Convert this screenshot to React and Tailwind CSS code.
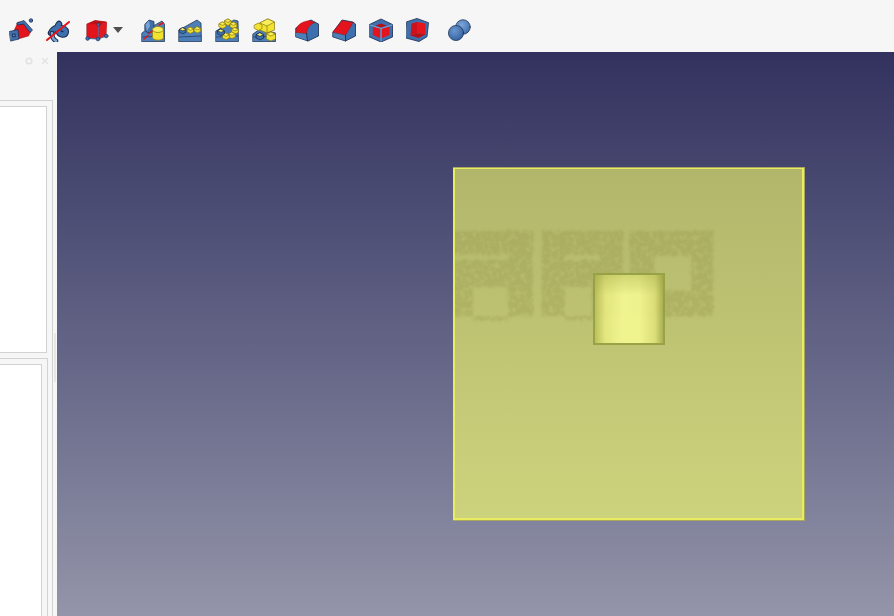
const OUT = "#16294d";
const BLUE = "#3f70ae";
const LIGHT = "#7aa3d4";
const RED = "#e3141b";
const YEL = "#f2e230";
const DYEL = "#8a7a10";

const Icon = ({ children, className = "" }) => (
  <svg viewBox="0 0 24 24" className={`h-6 w-6 shrink-0 ${className}`} strokeLinejoin="round" strokeLinecap="round">
    {children}
  </svg>
);

const Nut = ({ x, y, s = 1, fill = YEL, line = DYEL }) => (
  <g transform={`translate(${x} ${y}) scale(${s})`} stroke={line} strokeWidth="0.7">
    <path d="M-3.2 -1 L0 -2.8 L3.2 -1 L3.2 1.8 L0 3.4 L-3.2 1.8 Z" fill={fill} />
    <path d="M-3.2 -1 L0 0.4 L3.2 -1 L0 -2.8 Z" fill="#f8ee5c" />
  </g>
);

const Draft = () => (
  <Icon>
    <path d="M4 15 L9 4 L16 5 L22 13 L19.5 18 L9 21 Z" fill={RED} stroke="#8f0c12" strokeWidth="0.5" />
    <path d="M8 5 L15 2.5 L23.5 12 L21 14.5 L14.5 6 L9 7 Z" fill={BLUE} stroke={OUT} strokeWidth="0.7" />
    <path d="M0.5 13.5 L9 11.5 L10 21 L2 23 Z" fill={BLUE} stroke={OUT} strokeWidth="0.7" />
    <rect x="3.2" y="15.6" width="3.4" height="3.6" fill="#1b2f55" />
    <rect x="4.2" y="16.6" width="1.4" height="1.6" fill={LIGHT} />
    <circle cx="22" cy="2.5" r="1.8" fill={BLUE} stroke={OUT} strokeWidth="0.7" />
  </Icon>
);

const Knot = () => (
  <Icon>
    <path d="M5 15 C8 9 14 9 18 11 C21 13 20 17 16 16.5 C12 15.5 10 9 13 6" fill="none" stroke={OUT} strokeWidth="6.4" />
    <path d="M5 15 C8 9 14 9 18 11 C21 13 20 17 16 16.5 C12 15.5 10 9 13 6" fill="none" stroke={BLUE} strokeWidth="4.4" />
    <path d="M6 15 C6 19 8 22 10 23" fill="none" stroke={OUT} strokeWidth="4.6" />
    <path d="M6 15 C6 19 8 22 10 23" fill="none" stroke={LIGHT} strokeWidth="2.6" />
    <path d="M1 22 L23 4" stroke={RED} strokeWidth="2" />
  </Icon>
);

const Cube = () => (
  <Icon>
    <path d="M2 6 L10 2.5 L21.5 4 L21 18 L13 21 L2 20 Z" fill={RED} stroke="#8f0c12" strokeWidth="0.6" />
    <path d="M13.5 6.5 L21.5 4 L21 18 L13 21 Z" fill="#e01a1f" />
    <path d="M2 6 L10 2.5 L21.5 4 L13.5 6.5 Z" fill="#c01015" />
    <path d="M2 20.5 L13 21 L21 18 M13.5 6.5 L13 21" stroke={BLUE} strokeWidth="0.8" fill="none" />
    <circle cx="2.6" cy="20.5" r="1.9" fill={BLUE} stroke={OUT} strokeWidth="0.5" />
    <circle cx="13" cy="21" r="1.9" fill={BLUE} stroke={OUT} strokeWidth="0.5" />
    <circle cx="21.2" cy="18" r="1.9" fill={BLUE} stroke={OUT} strokeWidth="0.5" />
    <circle cx="13.5" cy="6.5" r="1.6" fill={BLUE} stroke={OUT} strokeWidth="0.5" />
  </Icon>
);

const Base = ({ d }) => (
  <>
    <path d={d} fill="#4d7fb9" stroke={OUT} strokeWidth="0.7" />
    <path d="M1.5 19 L23 18" stroke={OUT} strokeWidth="0.6" />
  </>
);

const Mirror = () => (
  <Icon>
    <Base d="M1 15 L5 12 L21 3 L23.5 6 L23.5 23.5 L1 23.5 Z" />
    <path d="M4 6 L8 2 L13 3.5 L13 13 L7 15 L4 12.5 Z" fill={BLUE} stroke={OUT} strokeWidth="0.7" />
    <path d="M4.5 6.5 L8 2.5 L9 8 L6 13 Z" fill={LIGHT} />
    <path d="M11.5 11.5 L11.5 19.5 C12 23 22.5 23 22.5 19.5 L22.5 11.5 Z" fill={YEL} stroke={DYEL} strokeWidth="0.7" />
    <ellipse cx="17" cy="11.5" rx="5.5" ry="3" fill="#f8ee5c" stroke={DYEL} strokeWidth="0.7" />
    <path d="M3 21 L7 17.5 M8 15.5 L11 13 M18 7 L22 5" stroke={RED} strokeWidth="1.4" />
  </Icon>
);

const LinearPattern = () => (
  <Icon>
    <Base d="M1 12 L19 2 L23 5 L23.5 23.5 L1 23.5 Z" />
    <Nut x={4.8} y={12.5} fill={BLUE} line={OUT} />
    <Nut x={12.4} y={12} />
    <Nut x={19.4} y={11.5} />
  </Icon>
);

const PolarPattern = () => (
  <Icon>
    <Base d="M1 13 L19 2 L23 3 L23.5 23.5 L1 23.5 Z" />
    <Nut x={13} y={4} s={1.05} />
    <Nut x={7.5} y={7} s={1.05} />
    <Nut x={18.5} y={7} s={1.05} />
    <Nut x={20} y={12.5} s={1.05} />
    <Nut x={17} y={17} s={1.05} />
    <Nut x={11} y={18} s={1.05} />
    <Nut x={6} y={14} s={1.05} fill={BLUE} line={OUT} />
  </Icon>
);

const MultiTransform = () => (
  <Icon>
    <Base d="M1 16 L8 11 L16 13 L23.5 15 L23.5 23.5 L1 23.5 Z" />
    <g stroke={DYEL} strokeWidth="0.7">
      <path d="M8 5 L16 1 L22.5 4 L22.5 12 L15 15 L8 12 Z" fill={YEL} />
      <path d="M8 5 L15 8 L22.5 4 L16 1 Z" fill="#f8ee5c" />
      <path d="M15 8 L15 15" fill="none" />
      <path d="M2.5 7 L6.5 5 L10 7 L10 10.5 L6.5 12.5 L2.5 10.5 Z" fill={YEL} />
      <path d="M14.5 16 L19 14 L23.5 16 L23.5 21 L19 23 L14.5 21 Z" fill={YEL} />
      <path d="M14.5 16 L19 18 L23.5 16 L19 14 Z" fill="#f8ee5c" />
    </g>
    <Nut x={8} y={18} s={1.15} fill={BLUE} line={OUT} />
  </Icon>
);

const Fillet = () => (
  <Icon>
    <path d="M1 10 L16 2 L23.5 6 L23.5 18 L13 23 L1 19 Z" fill={BLUE} stroke={OUT} strokeWidth="0.8" />
    <path d="M1 14.5 L1.5 10 C4 5 10 3 15 2.5 L20 4.7 C15 6 12 10 11.5 15.5 Z" fill={RED} stroke="#8f0c12" strokeWidth="0.4" />
    <path d="M1 15 L11.5 16 L12.5 22.5 L1 18.7 Z" fill="#4d7fb9" />
    <path d="M11.5 15.5 L12.5 23" stroke={OUT} strokeWidth="0.8" />
  </Icon>
);

const Chamfer = () => (
  <Icon>
    <path d="M1 14 L10 2 L21 4 L23.5 6 L23.5 18 L13.5 23 L1 19 Z" fill={BLUE} stroke={OUT} strokeWidth="0.8" />
    <path d="M1 14 L10 2.5 L21 4.7 L13.5 17 Z" fill={RED} stroke="#8f0c12" strokeWidth="0.4" />
    <path d="M1.5 15 L13 17.5 L13.5 22.5 L1.5 18.7 Z" fill="#4d7fb9" />
    <path d="M13.5 17 L13.5 23" stroke={OUT} strokeWidth="0.8" />
  </Icon>
);

const Thickness = () => (
  <Icon>
    <path d="M0.5 6.5 L12 1 L23.5 6.5 L23.5 19 L12 24 L0.5 19 Z" fill={BLUE} stroke={OUT} strokeWidth="0.8" />
    <path d="M3.8 8.7 L11.3 10.3 L11.3 20.3 L3.8 17 Z" fill={RED} />
    <path d="M20.5 8.7 L12.7 10.3 L12.7 20.3 L20.5 17 Z" fill={RED} />
    <path d="M6.5 7.5 L12 5.5 L17.5 7.5 L12 9.5 Z" fill="#b80f16" />
    <path d="M12 10.5 L12 23 M1 7 L12 10.5 L23 7" stroke={LIGHT} strokeWidth="1" fill="none" />
  </Icon>
);

const Hollow = () => (
  <Icon>
    <path d="M1 3.7 L11 0.5 L22.5 4.7 L21 18.7 L13 23.5 L0 20 Z" fill={BLUE} stroke={OUT} strokeWidth="0.8" />
    <path d="M5.5 5.5 L11 4 L11.5 15.5 L4.5 17.5 Z" fill="#cc1218" />
    <path d="M11 4 L19.5 5.5 L19.5 16.5 L11.5 15.5 Z" fill={RED} />
    <path d="M4.5 17.5 L11.5 15.5 L19.5 16.5 L12.5 20 Z" fill="#b80f16" />
  </Icon>
);

const Boolean = () => (
  <Icon>
    <defs>
      <radialGradient id="sphereBack" cx="0.4" cy="0.35" r="0.75">
        <stop offset="0" stopColor="#7da7d9" />
        <stop offset="1" stopColor="#3a69a6" />
      </radialGradient>
      <radialGradient id="sphereFront" cx="0.4" cy="0.35" r="0.75">
        <stop offset="0" stopColor="#6a97cf" />
        <stop offset="1" stopColor="#2e5c99" />
      </radialGradient>
    </defs>
    <circle cx="16" cy="9" r="7.3" fill="url(#sphereBack)" stroke={OUT} strokeWidth="0.7" />
    <circle cx="9" cy="15" r="7.6" fill="url(#sphereFront)" stroke={OUT} strokeWidth="0.7" />
  </Icon>
);

const Toolbar = () => (
  <div className="flex h-[52px] shrink-0 items-center bg-[#f6f6f6] pt-[8px]">
    <div className="ml-[9px] flex items-center gap-[13px]">
      <Draft />
      <Knot />
    </div>
    <div className="ml-[15px] flex items-center gap-[4px]">
      <Cube />
      <div className="h-0 w-0 border-x-[5px] border-t-[6px] border-x-transparent border-t-[#505050]" />
    </div>
    <div className="ml-[18px] flex items-center gap-[13px]">
      <Mirror />
      <LinearPattern />
      <PolarPattern />
      <MultiTransform />
    </div>
    <div className="ml-[19px] flex items-center gap-[13px]">
      <Fillet />
      <Chamfer />
      <Thickness />
      <Hollow />
    </div>
    <div className="ml-[17px]">
      <Boolean />
    </div>
  </div>
);

const SidePanel = () => (
  <aside className="relative flex w-[57px] shrink-0 flex-col bg-[#f6f6f6]">
    <div className="flex h-[48px] shrink-0 items-start justify-end gap-[8px] pr-[8px] pt-[5px]">
      <svg viewBox="0 0 8 8" className="h-2 w-2" fill="none" stroke="#e2e2e2" strokeWidth="1.6">
        <circle cx="4" cy="4" r="2.8" />
      </svg>
      <svg viewBox="0 0 8 8" className="h-2 w-2" fill="none" stroke="#e2e2e2" strokeWidth="1.3">
        <path d="M1 1 L7 7 M7 1 L1 7" />
      </svg>
    </div>
    <div className="flex w-[53px] flex-1 flex-col border-r border-t border-[#d2d2d2] pt-[5px]">
      <div className="h-[247px] w-[47px] shrink-0 border-b border-r border-t border-[#d2d2d2] bg-white" />
      <div className="mt-[5px] flex w-[48px] flex-1 flex-col border-r border-t border-[#d2d2d2] pt-[5px]">
        <div className="w-[42px] flex-1 border-r border-t border-[#d2d2d2] bg-white" />
      </div>
    </div>
    <div className="absolute left-[54px] top-[281px] h-[49px] w-[2px] bg-[#e6e6e6]" />
  </aside>
);

// blurry logo showing through the plate, speckled by a noise mask
const Ghost = () => (
  <svg viewBox="0 0 348 350" className="absolute inset-0 h-full w-full">
    <defs>
      <filter id="rough" x="-5%" y="-5%" width="110%" height="110%">
        <feTurbulence type="fractalNoise" baseFrequency="0.3" numOctaves="3" seed="4" result="noise" />
        <feDisplacementMap in="SourceGraphic" in2="noise" scale="6" xChannelSelector="R" yChannelSelector="G" />
        <feGaussianBlur stdDeviation="1" result="soft" />
        <feTurbulence type="fractalNoise" baseFrequency="0.18" numOctaves="2" seed="9" />
        <feColorMatrix values="0 0 0 0 0  0 0 0 0 0  0 0 0 0 0  1.8 0 0 0 0" result="speckle" />
        <feComposite in="soft" in2="speckle" operator="in" />
        <feGaussianBlur stdDeviation="0.8" />
      </filter>
    </defs>
    <g filter="url(#rough)" fill="#8f8f3e" fillOpacity="0.3" fillRule="evenodd">
      <path d="M-6 62 H78 V148 H-6 Z M-6 86 V91 H53 V86 Z M18 118 V152 H53 V118 Z" />
      <path d="M87 62 H169 V148 H87 Z M110 86 V91 H145 V86 Z M110 118 V152 H137 V118 Z" />
      <path d="M175 62 H259 V148 H175 Z M200 87 V122 H237 V87 Z" />
    </g>
  </svg>
);

const Model = () => (
  <div className="absolute left-[396px] top-[115px] h-[354px] w-[352px] overflow-hidden border-y border-r border-[#a9a95e]">
    <div className="relative h-full w-full border-x-2 border-b-2 border-t border-[#e9ec5e] bg-gradient-to-b from-[#b1b66b] to-[#cdd37c]">
      <Ghost />
      <div className="absolute left-[138px] top-[104px] h-[72px] w-[72px] border-2 border-[#959f42] bg-[linear-gradient(180deg,#8a8f3050_0%,#8a8f3000_30%),linear-gradient(90deg,#bcc05a_0%,#e8eb80_15%,#f6fa93_40%,#f6fa93_65%,#dfe27a_88%,#a9ae4e_100%)] opacity-90" />
    </div>
  </div>
);

export default function App() {
  return (
    <div className="flex h-[616px] w-[894px] flex-col overflow-hidden bg-[#f6f6f6] font-['Liberation_Sans',sans-serif]">
      <Toolbar />
      <div className="flex min-h-0 flex-1">
        <SidePanel />
        <main className="relative flex-1 bg-gradient-to-b from-[#33325f] to-[#9495a9]">
          <Model />
        </main>
      </div>
    </div>
  );
}
